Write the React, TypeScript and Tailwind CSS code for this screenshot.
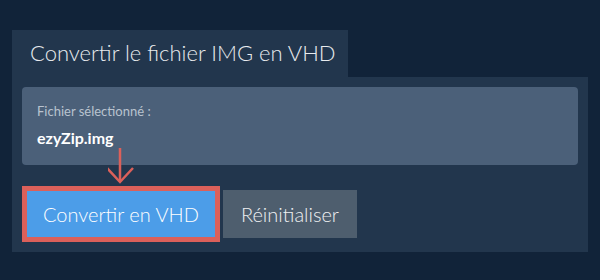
export default function App() {
  return (
    <div className="w-[600px] h-[280px] bg-[#112339] pt-[30px] px-[12px] font-['Lato',sans-serif]">
      {/* tab */}
      <div className="w-[336px] h-[47px] bg-[#22364d] pl-[18px] flex items-center">
        <h1 className="text-[22px] leading-none font-light text-[#e8ebee] pb-[2px]">
          Convertir le fichier IMG en VHD
        </h1>
      </div>

      {/* panel */}
      <div className="relative bg-[#22364d] p-[10px] h-[175px]">
        <div className="bg-[#4b6079] rounded-[4px] h-[78px] pl-[15px] pt-[18px]">
          <p className="text-[13px] leading-none text-[#b9c3cf]">Fichier sélectionné :</p>
          <p className="text-[16px] leading-none font-bold text-white mt-[12px]">ezyZip.img</p>
        </div>

        <div className="flex items-center mt-[21px]">
          <button className="h-[56px] border-[5px] border-[#dc605a] bg-[#4c9de8] px-[16px] text-[20px] font-light text-white">
            Convertir en VHD
          </button>
          <button className="ml-[3px] h-[48px] bg-[#4e5e6e] px-[18px] text-[20px] font-light text-[#eef0f2]">
            Réinitialiser
          </button>
        </div>

        {/* annotation arrow */}
        <svg
          className="absolute left-[96px] top-[69px]"
          width="30"
          height="40"
          viewBox="0 0 30 40"
          fill="none"
          stroke="#dc605a"
          strokeWidth="2.5"
        >
          <path d="M12 2 V36" />
          <path d="M-1 22 L12 36 L25 22" />
        </svg>
      </div>
    </div>
  );
}
